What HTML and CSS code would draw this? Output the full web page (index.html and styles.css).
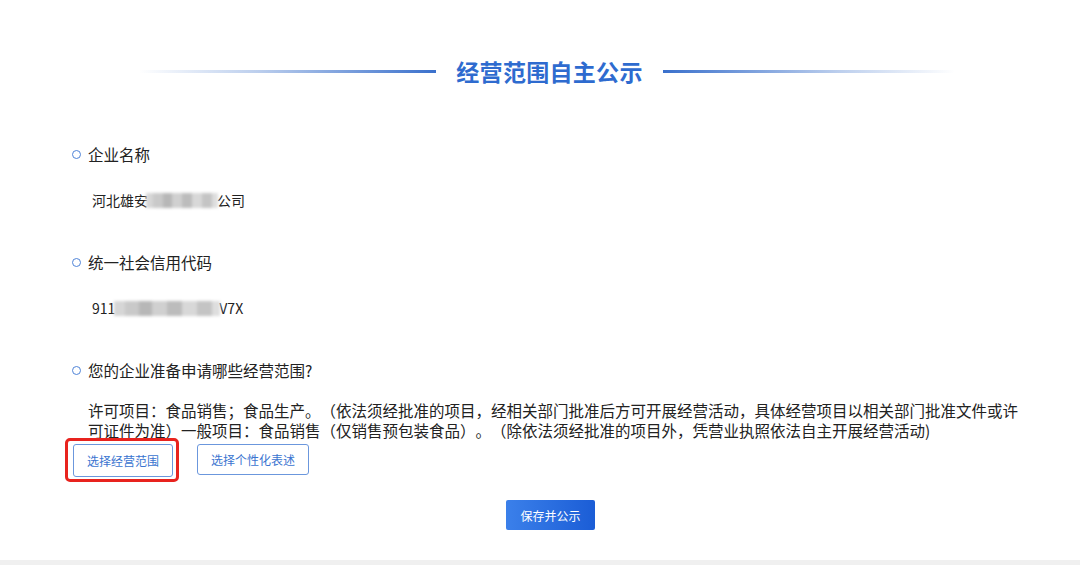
FILE: index.html
```html
<!DOCTYPE html>
<html lang="zh">
<head>
<meta charset="utf-8">
<link rel="stylesheet" href="styles.css">
</head>
<body>
<div class="page">
  <div class="header">
    <span class="line line-left"></span>
    <h1 class="title">经营范围自主公示</h1>
    <span class="line line-right"></span>
  </div>
  <div class="content">
    <div class="section sec1">
      <div class="label"><span class="dot"></span>企业名称</div>
      <div class="value">河北雄安<span class="mask mask1"></span>公司</div>
    </div>
    <div class="section sec2">
      <div class="label"><span class="dot"></span>统一社会信用代码</div>
      <div class="value">911<span class="mask mask2"></span>V7X</div>
    </div>
    <div class="section sec3">
      <div class="label"><span class="dot"></span>您的企业准备申请哪些经营范围?</div>
      <p class="scope">许可项目：食品销售；食品生产。（依法须经批准的项目，经相关部门批准后方可开展经营活动，具体经营项目以相关部门批准文件或许<br>可证件为准）一般项目：食品销售（仅销售预包装食品）。（除依法须经批准的项目外，凭营业执照依法自主开展经营活动)</p>
      <div class="actions">
        <span class="highlight"><button class="btn btn-a">选择经营范围</button></span>
        <button class="btn btn-b">选择个性化表述</button>
      </div>
    </div>
    <div class="footer">
      <button class="save">保存并公示</button>
    </div>
  </div>
</div>
<div class="strip"></div>
</body>
</html>
```
FILE: styles.css
```css
* { box-sizing: border-box; }
html, body { margin: 0; padding: 0; background: #fff; }
body {
  font-family: "Noto Sans CJK SC", "Noto Sans", "Liberation Sans", sans-serif;
  color: #333;
  width: 1080px;
  height: 565px;
  overflow: hidden;
}
.page { height: 560px; background: #fff; }
.header {
  display: flex;
  align-items: center;
  justify-content: center;
  padding-top: 55px;
  gap: 20px;
  padding-left: 14px;
}
.title {
  margin: 0;
  font-size: 23px;
  line-height: 32px;
  font-weight: 700;
  color: #2e6bcf;
  letter-spacing: 0.3px;
}
.line { display: block; width: 297px; height: 3px; }
.line-left { background: linear-gradient(to right, rgba(63,116,204,0), rgba(63,116,204,0.35) 40%, #3a70cc); }
.line-right { background: linear-gradient(to left, rgba(63,116,204,0), rgba(63,116,204,0.35) 40%, #3a70cc); width: 292px; }

.content { padding-left: 72px; }
.section { display: flex; flex-direction: column; }
.sec1 { padding-top: 55px; }
.sec2 { padding-top: 40px; }
.sec3 { padding-top: 40px; }
.label {
  display: flex;
  align-items: center;
  font-size: 15.5px;
  line-height: 24px;
  color: #222;
}
.dot {
  width: 9px;
  height: 9px;
  border: 1.5px solid #4f84d8;
  border-radius: 50%;
  margin-right: 7px;
  margin-top: 1px;
}
.value {
  padding-left: 20px;
  margin-top: 24px;
  font-size: 14px;
  line-height: 20px;
  color: #222;
  display: flex;
  align-items: center;
}
.mask {
  display: inline-block;
  height: 15px;
  filter: blur(1.5px);
  background: linear-gradient(to right, #d6d6d6 0 10%, #c9c9c9 10% 24%, #b7b7b7 24% 36%, #d0d0d0 36% 50%, #bcbcbc 50% 64%, #d8d8d8 64% 78%, #c4c4c4 78% 92%, #dedede 92%);
}
.mask1 { width: 72px; margin-left: -2px; margin-right: -1px; }
.mask2 { width: 106px; margin-left: -1px; margin-right: -1px; }
.scope {
  margin: 18px 0 0;
  padding-left: 16px;
  font-size: 15.5px;
  line-height: 20px;
  color: #222;
  text-spacing-trim: space-all;
}
.actions {
  display: flex;
  align-items: flex-start;
  gap: 24px;
  margin-top: 4px;
  padding-left: 1px;
}
.highlight { position: relative; display: inline-flex; }
.highlight::after {
  content: "";
  position: absolute;
  left: -8px; top: -6px; right: -6px; bottom: -5px;
  border: 3px solid #e8231e;
  border-radius: 5px;
}
.btn {
  font-family: inherit;
  background: #fff;
  border: 1px solid #6b97dd;
  border-radius: 3px;
  color: #3a74d0;
  font-size: 12px;
  padding: 0;
  cursor: pointer;
}
.btn-a { width: 100px; height: 33px; }
.btn-b { width: 112px; height: 31px; }
.footer {
  display: flex;
  justify-content: center;
  padding-top: 23px;
  padding-right: 51px;
}
.save {
  font-family: inherit;
  width: 89px;
  height: 30px;
  border: none;
  border-radius: 2px;
  background: linear-gradient(to right, #3b80ea, #1b5dd6);
  color: #fff;
  font-size: 12px;
  padding: 0;
}
.strip { height: 5px; background: #f0f0f0; }
```
